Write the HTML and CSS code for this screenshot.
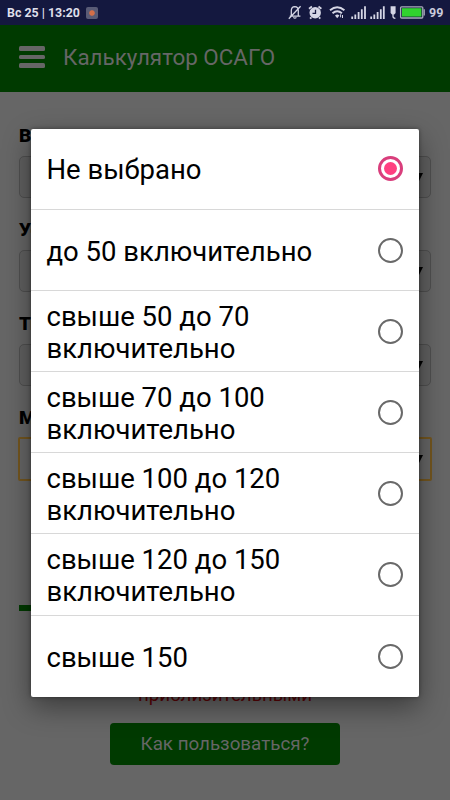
FILE: index.html
```html
<!DOCTYPE html>
<html lang="ru">
<head>
<meta charset="utf-8">
<title>Калькулятор ОСАГО</title>
<link rel="stylesheet" href="styles.css">
</head>
<body>
<div class="phone">
  <div class="status">
    <span class="clock">Вс 25 | 13:20</span>
    <span class="rec"></span>
    <svg class="status-icons" width="143" height="25" viewBox="286 0 143 25" fill="none" stroke="#d5d6e5" stroke-width="1.3">
      <path d="M289.8 16.2h10.6M291.3 16V10.5q0-3.7 3.5-3.9 3.5.2 3.5 3.9V16M293.4 17.4q1.5 1.6 3 0M288.8 18.7L300.6 6.2"/>
      <circle cx="315.2" cy="12.8" r="5.7" fill="#d5d6e5" stroke="none"/>
      <path d="M309 8.7l2.9-2.2M318.5 6.5l2.9 2.2M311.4 17.3l-1.3 1.4M319 17.3l1.3 1.4" stroke-width="1.8"/>
      <path d="M315.5 9.7v3.6h-3" stroke="#14183f"/>
      <path d="M330 10.3q7.2-6.3 14.4 0M332.5 13.2q4.7-4 9.4 0" stroke-width="1.9"/>
      <path d="M335 15.4q2.2-1.7 4.4 0l-2.2 2.8z" fill="#d5d6e5" stroke="none"/>
      <path d="M340.6 17.3v-3M342.5 15v3" stroke-width="1"/>
      <path d="M352.2 16.5V19M355.3 14.5V19M358.6 12V19M361.8 9.3V19M365 6.3V19M371.2 16.5V19M374.3 14.5V19M377.6 12V19M380.8 9.3V19M383.8 6.3V19" stroke-width="1.8"/>
      <path d="M390.6 6.3h5v6.8l-1.4 1.4h-2.2l-1.4-1.4z" fill="#d5d6e5" stroke="none"/>
      <path d="M393 14v2.5q0 1.7 2.4 1.8" />
      <rect x="400.6" y="6.8" width="22.2" height="11.2" rx="1" stroke="#a9acba"/>
      <rect x="402" y="8.2" width="19.4" height="8.4" fill="#31d22e" stroke="none"/>
      <path d="M424.2 9.2v6.4" stroke="#a9acba"/>
    </svg>
    <span class="level">99</span>
  </div>
  <header class="bar">
    <span class="menu"><i></i><i></i><i></i></span>
    <h1>Калькулятор ОСАГО</h1>
  </header>
  <main class="page">
    <div class="field"><label>В</label><div class="select"><i class="arrow"></i></div></div>
    <div class="field"><label>Ус</label><div class="select"><i class="arrow"></i></div></div>
    <div class="field"><label>Ти</label><div class="select"><i class="arrow"></i></div></div>
    <div class="field"><label>М</label><div class="select focus"><i class="arrow"></i></div></div>
    <div class="rule"></div>
    <p class="note">приблизительными</p>
    <div class="help">Как пользоваться?</div>
  </main>
  <div class="dialog">
    <div class="option"><span>Не выбрано</span><i class="radio on"></i></div>
    <div class="option"><span>до 50 включительно</span><i class="radio"></i></div>
    <div class="option"><span>свыше 50 до 70<br>включительно</span><i class="radio"></i></div>
    <div class="option"><span>свыше 70 до 100<br>включительно</span><i class="radio"></i></div>
    <div class="option"><span>свыше 100 до 120<br>включительно</span><i class="radio"></i></div>
    <div class="option"><span>свыше 120 до 150<br>включительно</span><i class="radio"></i></div>
    <div class="option"><span>свыше 150</span><i class="radio"></i></div>
  </div>
</div>
</body>
</html>
```
FILE: styles.css
```css
* { box-sizing: border-box; }
body { margin: 0; font-family: Roboto, "Noto Sans", sans-serif; background: #666; }
.phone { position: relative; width: 450px; height: 800px; overflow: hidden; background: #666; }
.status { display: flex; align-items: center; height: 25px; padding-left: 7px; background: #14183f; color: #dedfea; }
.clock { width: 79px; font-size: 12.4px; font-weight: 700; white-space: nowrap; }
.rec { width: 12px; height: 12px; border-radius: 2px; background: radial-gradient(circle, #d36e48 0 2.3px, #595b76 3.2px); }
.status-icons { margin-left: 188px; flex: none; }
.level { font-size: 12.5px; font-weight: 700; color: #c9cbdc; }
.bar { display: flex; align-items: center; height: 67px; padding: 0 0 3px 19px; background: #003a00; }
.menu { display: flex; flex-direction: column; gap: 4px; width: 26px; }
.menu i { height: 4.7px; border-radius: 1.5px; background: #666; }
.bar h1 { margin: 0 0 0 18px; font-size: 22.4px; font-weight: 400; line-height: 30px; color: #666; white-space: nowrap; }
.page { display: flex; flex-direction: column; padding: 33px 19px 0; }
.field { height: 93.9px; }
.field label { display: block; height: 31px; font-size: 19px; font-weight: 900; line-height: 22px; color: #000; }
.select { display: flex; align-items: center; justify-content: flex-end; height: 42px; padding-right: 7px; border: 1px solid #505050; border-radius: 5px; background: #606060; }
.select.focus { height: 44px; margin: -1px -1px 0; border: 2px solid #73561f; border-radius: 2px; background: #666; }
.arrow { border: 4px solid transparent; border-top: 8px solid #000; border-bottom: 0; }
.rule { width: 300px; height: 6px; margin-top: 104.4px; background: #003a00; }
.note { margin: 73px 0 0; font-size: 18.8px; line-height: 22px; text-align: center; color: #5e0507; }
.help { align-self: center; width: 230px; height: 42px; margin-top: 17px; border-radius: 4px; background: #003a00; color: #666; font-size: 18.8px; line-height: 42px; text-align: center; }
.dialog { position: absolute; left: 31px; top: 128.5px; width: 388px; height: 568px; border-radius: 2px; background: #fff; box-shadow: 0 10px 28px rgba(0,0,0,.42), 0 0 4px rgba(0,0,0,.4); }
.option { display: flex; align-items: center; justify-content: space-between; height: 81.2px; padding: 3.5px 16.5px 0 15.5px; border-bottom: 1px solid #d8d8d8; color: #000; font-size: 27.5px; line-height: 32px; }
.option:last-child { border-bottom: 0; }
.radio { flex: none; display: flex; width: 25px; height: 25px; margin-top: -3px; border: 2.5px solid #696969; border-radius: 50%; }
.radio.on { align-items: center; justify-content: center; border-width: 3px; border-color: #d93e7c; }
.radio.on::before { content: ""; width: 13px; height: 13px; border-radius: 50%; background: #ff4081; }
```
